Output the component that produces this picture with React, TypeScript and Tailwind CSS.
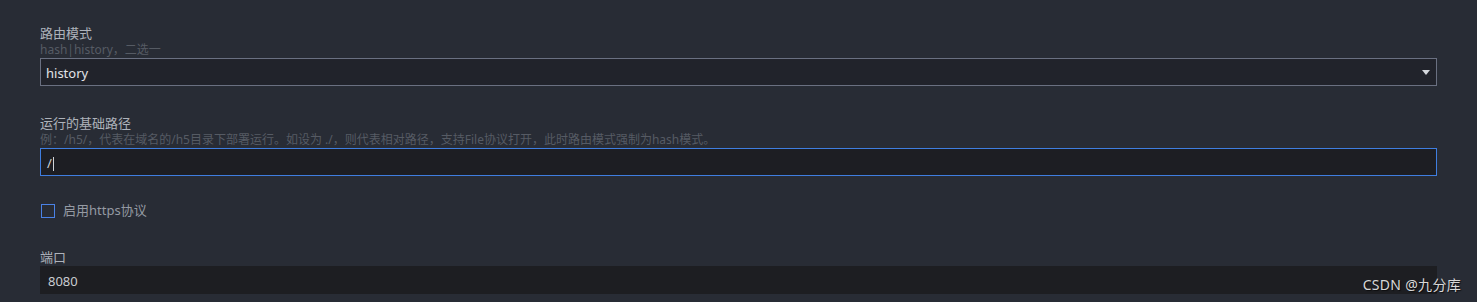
import React from 'react';

const font = { fontFamily: '"Microsoft YaHei", "Noto Sans", "Noto Sans CJK SC", sans-serif' };

const Label: React.FC<{ text: string; hint?: string }> = ({ text, hint }) => (
  <div>
    <div className="text-[13px] leading-[18px] text-[#aeb3bb]">{text}</div>
    {hint && <div className="text-[12px] leading-4 text-[#565b64]">{hint}</div>}
  </div>
);

const App: React.FC = () => {
  return (
    <div className="relative w-[1477px] h-[302px] overflow-hidden bg-[#282c35] pl-10 pr-10 pt-6" style={font}>
      {/* 路由模式 */}
      <Label text="路由模式" hint="hash|history，二选一" />
      <div className="flex h-7 items-center justify-between border border-[#6a7081] bg-[#21232b] pl-[5px] pr-[6px]">
        <span className="pt-[3px] text-[13px] text-[#e2e4e8]">history</span>
        <svg width="8" height="5" viewBox="0 0 8 5">
          <path d="M0 0h8L4 5z" fill="#d4d7dc" />
        </svg>
      </div>

      {/* 基础路径 */}
      <div className="mt-7">
        <Label
          text="运行的基础路径"
          hint="例：/h5/，代表在域名的/h5目录下部署运行。如设为 ./，则代表相对路径，支持File协议打开，此时路由模式强制为hash模式。"
        />
        <div className="flex h-7 items-center border border-[#3f7ee0] bg-[#1d1e23] pl-[6px]">
          <span className="pt-[3px] text-[13px] text-[#d0d3d8]">/</span>
          <span className="mt-[3px] ml-[1px] h-[14px] w-px bg-[#d0d3d8]" />
        </div>
      </div>

      {/* https */}
      <label className="mt-6 flex h-[22px] items-center gap-2">
        <span className="ml-px h-[14px] w-[14px] border border-[#4a82e6]" />
        <span className="text-[13px] text-[#959aa3]">启用https协议</span>
      </label>

      {/* 端口 */}
      <div className="mt-[26px]">
        <Label text="端口" />
        <div className="flex h-7 items-center bg-[#1d1e22] pl-2">
          <span className="pt-[3px] text-[13px] text-[#c9ccd1]">8080</span>
        </div>
      </div>

      <div
        className="absolute right-[16px] bottom-[8px] text-[14px] leading-[18px] tracking-[0.3px] text-[#d8d8d8]"
        style={{ textShadow: '1px 1px 1px rgba(0,0,0,0.6)' }}
      >
        CSDN @九分库
      </div>
    </div>
  );
};

export default App;
